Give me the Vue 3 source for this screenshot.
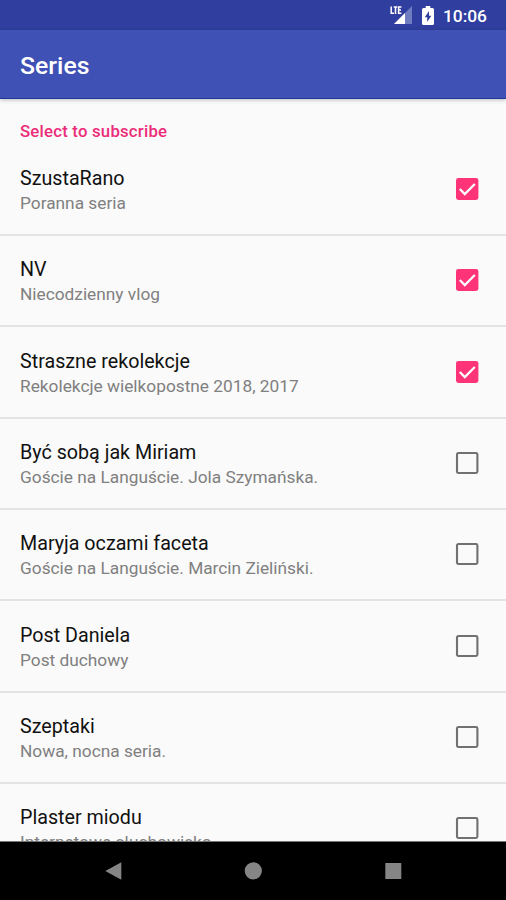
<script setup>
import { ref } from 'vue'

const series = ref([
  { title: 'SzustaRano', summary: 'Poranna seria', checked: true },
  { title: 'NV', summary: 'Niecodzienny vlog', checked: true },
  { title: 'Straszne rekolekcje', summary: 'Rekolekcje wielkopostne 2018, 2017', checked: true },
  { title: 'Być sobą jak Miriam', summary: 'Goście na Languście. Jola Szymańska.', checked: false },
  { title: 'Maryja oczami faceta', summary: 'Goście na Languście. Marcin Zieliński.', checked: false },
  { title: 'Post Daniela', summary: 'Post duchowy', checked: false },
  { title: 'Szeptaki', summary: 'Nowa, nocna seria.', checked: false },
  { title: 'Plaster miodu', summary: 'Internetowe słuchowisko', checked: false },
])
</script>

<template>
  <div class="screen">
    <div class="status">
      <svg class="signal" width="24" height="20" viewBox="0 0 24 20">
        <path d="M23 1V19H5Z" fill="#6f7cc0" />
        <path d="M16 8V19H5Z" fill="#fff" />
        <path d="M2.2 1.5V8.3H5M4.7 2H8.3M6.5 2V9M12.4 2H9.6V8.3H12.4M9.6 5.1H12" fill="none" stroke="#fff" stroke-width="1.5" />
      </svg>
      <svg class="battery" width="12" height="19" viewBox="0 0 12 19">
        <path d="M3.7 0H8.3V2H10.5Q12 2 12 3.5V17.5Q12 19 10.5 19H1.5Q0 19 0 17.5V3.5Q0 2 1.5 2H3.7Z" fill="#fff" />
        <path d="M7 5L2.8 11.3H5.2V16L9.3 9.7H7Z" fill="#303f9f" />
      </svg>
      <span class="clock">10:06</span>
    </div>
    <header class="toolbar"><h1>Series</h1></header>
    <main class="content">
      <h2>Select to subscribe</h2>
      <div v-for="item in series" :key="item.title" class="row" @click="item.checked = !item.checked">
        <div class="labels">
          <div class="title">{{ item.title }}</div>
          <div class="summary">{{ item.summary }}</div>
        </div>
        <svg class="check" width="24" height="24" viewBox="0 0 24 24">
          <template v-if="item.checked">
            <rect x="1" y="1" width="22.4" height="22" rx="2.4" fill="#ff3378" />
            <path d="M4.8 12L9.8 17L19.8 7" fill="none" stroke="#fff" stroke-width="2.3" />
          </template>
          <rect v-else x="2" y="2" width="20.4" height="20" rx="1.4" fill="none" stroke="#717171" stroke-width="2.1" />
        </svg>
      </div>
    </main>
    <nav class="navbar">
      <svg width="506" height="58" viewBox="0 0 506 58" fill="#858585">
        <path d="M105.3 29L121.3 20.2V37.8Z" />
        <circle cx="253.3" cy="28.8" r="8.6" />
        <rect x="385.3" y="21" width="16" height="16" rx=".6" />
      </svg>
    </nav>
  </div>
</template>

<style>
body {
  margin: 0;
  background: #000;
}
</style>

<style scoped>
.screen {
  width: 506px;
  height: 900px;
  display: flex;
  flex-direction: column;
  overflow: hidden;
  background: #fafafa;
  font-family: Roboto, sans-serif;
}
.status {
  height: 30px;
  flex: none;
  box-sizing: border-box;
  padding: 0 19px 0 0;
  display: flex;
  align-items: center;
  justify-content: flex-end;
  background: #303f9f;
  color: #fff;
}
.signal {
  margin-right: 9px;
}
.battery {
  margin-right: 9px;
}
.clock {
  font-size: 17.4px;
  font-weight: 500;
  line-height: 20px;
  padding-top: 2px;
}
.toolbar {
  height: 69px;
  flex: none;
  box-sizing: border-box;
  padding: 4px 20px 0;
  display: flex;
  align-items: center;
  background: #3f51b5;
  border-bottom: 1px solid #2038a0;
  box-shadow: 0 1px 4px rgba(0, 0, 0, 0.25);
  z-index: 1;
}
h1 {
  margin: 0;
  color: #fff;
  font-size: 24.8px;
  font-weight: 500;
  line-height: 30px;
}
.content {
  height: 743px;
  flex: none;
  box-sizing: border-box;
  overflow: hidden;
  border-bottom: 1px solid #777;
}
h2 {
  margin: 0;
  padding: 22px 20px 2.7px;
  height: 21px;
  color: #ec2c78;
  font-size: 16.8px;
  letter-spacing: 0.2px;
  font-weight: 500;
  line-height: 21px;
}
.row {
  height: 91.35px;
  box-sizing: border-box;
  padding: 0 27px 1px 20px;
  display: flex;
  align-items: center;
  border-bottom: 2px solid #e3e3e3;
}
.labels {
  flex: 1;
  padding: 3px 0 1px;
  white-space: nowrap;
}
.title {
  color: #111;
  font-size: 19.7px;
  line-height: 26px;
}
.summary {
  color: #808080;
  font-size: 17.3px;
  line-height: 22px;
}
.check {
  flex: none;
}
.navbar {
  height: 58px;
  flex: none;
  background: #000;
}
.navbar svg {
  display: block;
}
</style>
